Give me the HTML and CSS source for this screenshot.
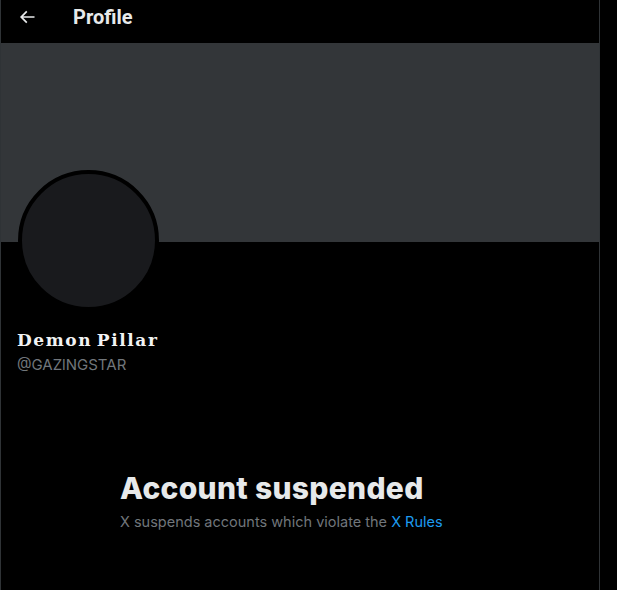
FILE: index.html
```html
<!DOCTYPE html>
<html lang="en">
<head>
<meta charset="utf-8">
<title>Profile</title>
<link rel="stylesheet" href="styles.css">
</head>
<body>
<div class="page">
  <main class="main">
    <header class="topbar">
      <button class="back" aria-label="Back">
        <svg viewBox="0 0 24 24" width="20" height="20"><path fill="#e7e9ea" d="M7.414 13l5.043 5.04-1.414 1.42L3.586 12l7.457-7.46 1.414 1.42L7.414 11H21v2H7.414z"/></svg>
      </button>
      <h2 class="title">Profile</h2>
    </header>
    <div class="banner"></div>
    <section class="profile">
      <div class="avatar"></div>
      <div class="name">Demon Pillar</div>
      <div class="handle">@GAZlNGSTAR</div>
    </section>
    <section class="suspended">
      <div class="suspended-inner">
        <h1 class="sus-title">Account suspended</h1>
        <p class="sus-text">X suspends accounts which violate the <a href="#" class="link">X Rules</a></p>
      </div>
    </section>
  </main>
</div>
</body>
</html>
```

FILE: styles.css
```css
* { box-sizing: border-box; }
html, body {
  margin: 0;
  padding: 0;
  background: #000;
  color: #e7e9ea;
  font-family: Roboto, "Liberation Sans", sans-serif;
}
.page {
  display: flex;
  min-height: 590px;
}
.main {
  width: 600px;
  min-height: 590px;
  border-left: 1px solid #2f3336;
  border-right: 1px solid #2f3336;
  display: flex;
  flex-direction: column;
}
.topbar {
  height: 43px;
  display: flex;
  align-items: flex-start;
  padding-top: 7px;
  padding-left: 16px;
}
.back {
  width: 20px;
  height: 20px;
  padding: 0;
  margin: 0;
  border: 0;
  background: transparent;
  display: flex;
}
.title {
  margin: 0 0 0 36px;
  font-size: 20px;
  font-weight: 700;
  line-height: 20px;
  color: #e7e9ea;
}
.banner {
  height: 199px;
  background: #333639;
}
.profile {
  padding: 0 16px 0 16px;
}
.avatar {
  width: 141px;
  height: 141px;
  margin-top: -72px;
  margin-left: 1px;
  border-radius: 50%;
  border: 4px solid #000;
  background: #191a1d;
}
.name {
  margin-top: 19px;
  font-family: "DejaVu Serif", "Liberation Serif", serif;
  font-weight: 700;
  font-size: 17px;
  letter-spacing: 1.6px;
  word-spacing: -3px;
  line-height: 20px;
  color: #f2f3f4;
}
.handle {
  margin-top: 5px;
  font-family: Inter, Roboto, sans-serif;
  font-size: 15px;
  line-height: 20px;
  color: #71767b;
}
.suspended {
  display: flex;
  padding-left: 119px;
  margin-top: 95px;
}
.sus-title {
  margin: 0;
  font-family: Inter, Roboto, sans-serif;
  font-size: 30px;
  font-weight: 800;
  letter-spacing: 0.3px;
  line-height: 36px;
  color: #e7e9ea;
}
.sus-text {
  margin: 6px 0 0;
  font-family: Inter, Roboto, sans-serif;
  font-size: 14.5px;
  line-height: 20px;
  color: #71767b;
}
.link {
  color: #1d9bf0;
  text-decoration: none;
}
```
